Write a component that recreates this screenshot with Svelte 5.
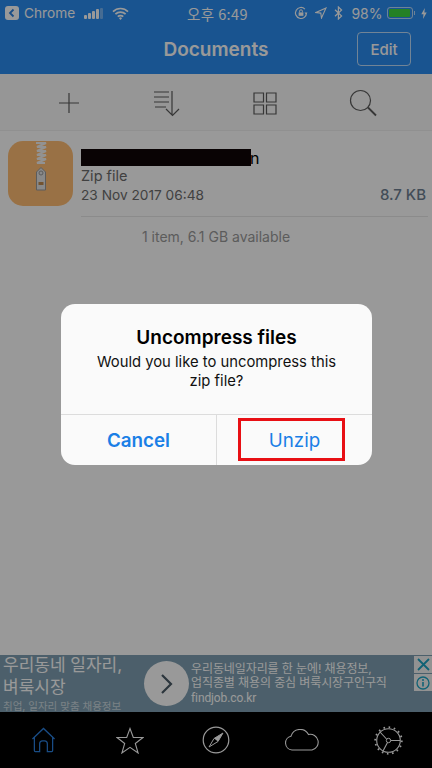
<script>
  const tools = ['plus', 'sort', 'grid', 'search'];
</script>

<div class="phone">
  <header class="head">
    <div class="status">
      <div class="st-left">
        <span class="back"><svg width="10" height="10" viewBox="0 0 10 10"><path d="M6.5 1.5 3 5l3.5 3.5" fill="none" stroke="#2b80e0" stroke-width="1.8"/></svg></span>
        <span class="st-txt">Chrome</span>
        <span class="signal"><i class="s1"></i><i class="s2"></i><i class="s3"></i><i class="s4"></i><i class="s5"></i></span>
        <svg class="wifi" width="17" height="13" viewBox="0 0 17 13"><path d="M1 4.6a10.6 10.6 0 0 1 15 0M3.4 7.2a7.2 7.2 0 0 1 10.2 0M5.8 9.7a3.7 3.7 0 0 1 5.4 0" fill="none" stroke="#fff" stroke-width="1.7"/><path d="M8.5 13 7 11.2a2 2 0 0 1 3 0z" fill="#fff"/></svg>
      </div>
      <div class="st-time">오후 6:49</div>
      <div class="st-right">
        <svg width="14" height="14" viewBox="0 0 14 14"><path d="M12.5 7a5.5 5.5 0 1 1-1.6-3.9" fill="none" stroke="#fff" stroke-width="1.2"/><path d="M13.5 6.5h-3l1.5 2z" fill="#fff"/><rect x="4.6" y="6.4" width="4.8" height="3.4" fill="#fff"/><path d="M5.6 6.4V5.2a1.4 1.4 0 0 1 2.8 0v1.2" fill="none" stroke="#fff"/></svg>
        <svg class="loc" width="12" height="12" viewBox="0 0 12 12"><path d="M11 1 1 5.5l4.8.6.7 4.9z" fill="none" stroke="#fff" stroke-width="1.1"/></svg>
        <svg class="bt" width="9" height="14" viewBox="0 0 9 14"><path d="M1 3.8 7.6 10 4.4 13V1l3.2 3L1 10.2" fill="none" stroke="#fff" stroke-width="1.2"/></svg>
        <span class="pct">98%</span>
        <span class="batt"><i></i></span><span class="nub"></span>
        <svg class="bolt" width="6" height="11" viewBox="0 0 6 11"><path d="M3.8 0 .3 6.2h2.2L2 11l3.7-6.5H3.4z" fill="#fff"/></svg>
      </div>
    </div>
    <div class="nav">
      <h1>Documents</h1>
      <span class="edit">Edit</span>
    </div>
  </header>

  <div class="tools">
    {#each tools as t}
      <span class="tool">
        {#if t === 'plus'}
          <svg width="20" height="20" viewBox="0 0 20 20"><path d="M10 0v20M0 10h20" stroke="#5c5c5c" stroke-width="1.2" fill="none"/></svg>
        {:else if t === 'sort'}
          <svg width="27" height="27" viewBox="0 0 27 27"><path d="M0 2h15M0 7h15M0 12h15M1 17h11M18 1v24M12 19l6.500 6.500L25 19" stroke="#5c5c5c" stroke-width="1.2" fill="none"/></svg>
        {:else if t === 'grid'}
          <svg width="24" height="23" viewBox="0 0 24 23"><path d="M1 1h9.500v9H1zM13.500 1H23v9h-9.500zM1 13h9.500v9H1zM13.500 13H23v9h-9.500z" stroke="#5c5c5c" stroke-width="1.2" fill="none"/></svg>
        {:else}
          <svg width="28" height="28" viewBox="0 0 28 28"><circle cx="11.500" cy="11.500" r="10" stroke="#5c5c5c" stroke-width="1.2" fill="none"/><path d="m19 18.500 8 8" stroke="#5c5c5c" stroke-width="1.800" fill="none"/></svg>
        {/if}
      </span>
    {/each}
  </div>

  <main class="content">
    <div class="row">
      <div class="zip">
        <svg width="14" height="50" viewBox="0 0 14 50"><path d="M2 2h10L3 6h9L3 10h9l-9 4h9l-9 4h9l-9 4h8" fill="none" stroke="#f4f4f4" stroke-width="2"/><path d="M7 26.500 11.500 31v18h-9V31z" fill="#e4e4e4" stroke="#999"/><circle cx="7" cy="32" r="2" fill="none" stroke="#999"/><rect x="4.500" y="41" width="5" height="3" fill="#c08a50"/></svg>
      </div>
      <div class="meta">
        <div class="name"><span class="redact"></span><span class="tail">n</span></div>
        <div class="type">Zip file</div>
        <div class="line"><span>23 Nov 2017 06:48</span><span class="size">8.7 KB</span></div>
      </div>
    </div>
    <p class="avail">1 item, 6.1 GB available</p>
  </main>

  <aside class="ad">
    <div class="ad-left">
      <div class="ad-title">우리동네 일자리,<br />벼룩시장</div>
      <div class="ad-sub">취업, 일자리 맞춤 채용정보</div>
    </div>
    <span class="ad-go"><svg width="14" height="22" viewBox="0 0 14 22"><path d="m2 2 9 9-9 9" fill="none" stroke="#4a5a66" stroke-width="2.200"/></svg></span>
    <div class="ad-right">
      <div>우리동네일자리를 한 눈에! 채용정보,</div>
      <div>업직종별 채용의 중심 벼룩시장구인구직</div>
      <div class="ad-url">findjob.co.kr</div>
    </div>
    <div class="ad-ctl">
      <span><svg width="13" height="13" viewBox="0 0 13 13"><path d="m1 1 11 11M12 1 1 12" stroke="#1ba3c4" stroke-width="1.800" fill="none"/></svg></span>
      <span><svg width="14" height="14" viewBox="0 0 14 14"><circle cx="7" cy="7" r="6" fill="none" stroke="#1ba3c4" stroke-width="1.300"/><path d="M7 6v4.500" stroke="#1ba3c4" stroke-width="1.600"/><circle cx="7" cy="3.900" r="1" fill="#1ba3c4"/></svg></span>
    </div>
  </aside>

  <nav class="tabs">
    <span><svg width="25" height="26" viewBox="0 0 26 26"><path d="M1.500 12 13 1l11.500 11M3.500 10.500V24a1 1 0 0 0 1 1H9V17a3 3 0 0 1 3-3h2a3 3 0 0 1 3 3v8h4.500a1 1 0 0 0 1-1V10.500" fill="none" stroke="#2b80e0" stroke-width="1.300"/></svg></span>
    <span><svg width="28" height="27" viewBox="0 0 28 27"><path d="m14 1.500 3.300 9h9.700l-7.700 6 2.800 9.500-8.100-5.700L5.900 26l2.800-9.500-7.700-6h9.700z" fill="none" stroke="#fff" stroke-width="1.100"/></svg></span>
    <span><svg width="28" height="28" viewBox="0 0 28 28"><circle cx="14" cy="14" r="12.800" fill="none" stroke="#fff" stroke-width="1.200"/><path d="m21 7-9 5.500L7 21l9-5.500z" fill="none" stroke="#fff" stroke-width="1"/><path d="m21 7-9 5.500 4 3z" fill="#fff"/></svg></span>
    <span><svg width="36" height="22" viewBox="0 0 36 22"><path d="M8 21a7 7 0 0 1-1-13.800A9.500 9.500 0 0 1 24.500 5.500 7.800 7.800 0 0 1 28 21z" fill="none" stroke="#fff" stroke-width="1.100"/></svg></span>
    <span><svg width="29" height="29" viewBox="0 0 29 29"><circle cx="14.500" cy="14.500" r="11.800" fill="none" stroke="#fff" stroke-width="1.100"/><circle cx="14.500" cy="14.500" r="13.300" fill="none" stroke="#fff" stroke-width="1.800" stroke-dasharray="1.600 3.600"/><circle cx="14.500" cy="14.500" r="2.200" fill="none" stroke="#fff"/><path d="M12.500 13 6 6M16.700 14.500H26M13.500 16.500 9 25" stroke="#fff" stroke-width="1.100" fill="none"/></svg></span>
  </nav>

  <div class="scrim"></div>

  <div class="dialog" role="dialog">
    <div class="d-body">
      <h2>Uncompress files</h2>
      <p>Would you like to uncompress this zip file?</p>
    </div>
    <div class="d-btns">
      <span class="d-btn bold">Cancel</span>
      <span class="d-btn">Unzip<span class="mark"></span></span>
    </div>
  </div>
</div>

<style>
  :global(body) { margin: 0; }
  .phone {
    position: relative;
    width: 432px;
    height: 768px;
    overflow: hidden;
    display: flex;
    flex-direction: column;
    background: #fff;
    font-family: Inter, "Noto Sans CJK KR", sans-serif;
  }
  .head { background: #2b8df0; color: #fff; height: 74px; flex: none; }
  .status {
    height: 24px;
    display: flex;
    align-items: center;
    justify-content: space-between;
    padding: 1px 5px 0 5px;
    font-size: 13.700px;
    position: relative;
  }
  .st-left, .st-right { display: flex; align-items: center; }
  .back {
    width: 14px; height: 14px; background: #fff; border-radius: 3px;
    display: flex; align-items: center; justify-content: center;
  }
  .st-txt { margin-left: 5px; }
  .signal { display: flex; align-items: flex-end; gap: 1px; margin-left: 9px; height: 11px; }
  .signal i { width: 3px; background: #fff; border-radius: 1px; display: block; }
  .s1 { height: 4px; } .s2 { height: 6px; } .s3 { height: 8px; } .s4 { height: 10px; }
  .signal .s5 { height: 11px; opacity: .35; }
  .wifi { margin-left: 9px; }
  .st-time { font-size: 14.500px; font-family: "Noto Sans CJK KR", Inter, sans-serif; letter-spacing: .4px; position: absolute; left: 187px; }
  .loc { margin-left: 7px; }
  .bt { margin-left: 7px; }
  .pct { margin-left: 8px; font-size: 14px; }
  .batt {
    margin-left: 4px; width: 22px; height: 8px; border: 1px solid #ffffffaa; border-radius: 3px;
    padding: 1px; box-sizing: content-box; display: block;
  }
  .batt i { display: block; width: 21px; height: 8px; background: #3dd53d; border-radius: 1px; }
  .nub { width: 1.500px; height: 4px; background: #ffffffaa; margin-left: 1px; }
  .bolt { margin-left: 6px; }
  .nav { position: relative; height: 50px; display: flex; align-items: center; justify-content: center; }
  h1 { margin: -1px 0 0 0; font-size: 19px; font-weight: 600; }
  .edit {
    position: absolute; right: 21px; top: 7px;
    width: 52px; height: 32px; border: 1.500px solid #ffffffb0; border-radius: 4px;
    display: flex; align-items: center; justify-content: center;
    font-size: 15px; font-weight: 500;
  }
  .tools {
    height: 56px; flex: none; background: #fafafa;
    display: flex; align-items: center; padding-left: 20px;
    border-bottom: 1px solid #f0f0f0;
  }
  .tool { width: 98px; display: flex; justify-content: center; margin-top: 2px; }
  .content { flex: 1; background: #fff; }
  .row { display: flex; height: 85px; box-sizing: border-box; padding: 10px 4px 0 8px; }
  .zip {
    width: 65px; height: 65px; border-radius: 15px; background: #ffbd74; flex: none;
    display: flex; justify-content: center; align-items: flex-start;
  }
  .meta {
    margin-left: 8px; flex: 1; height: 75px; border-bottom: 1px solid #e8e8e8;
    font-size: 14px; color: #6d6d6d;
  }
  .name { position: relative; height: 26px; padding-top: 8px; box-sizing: border-box; color: #000; font-size: 16px; line-height: 18px; }
  .redact { position: absolute; left: 0; top: 8px; width: 170px; height: 17px; background: #100508; }
  .tail { position: absolute; left: 169px; top: 8px; }
  .type { line-height: 18px; font-size: 14.500px; }
  .line { display: flex; justify-content: space-between; align-items: center; line-height: 20px; padding-right: 2px; font-size: 13.700px; }
  .size { font-size: 15px; font-weight: 500; color: #6e7f92; }
  .avail { margin: 12px 0 0; text-align: center; font-size: 14px; color: #9a9a9a; }
  .ad {
    position: relative; height: 57px; flex: none; background: #7f9fb2; color: #fff;
    display: flex; align-items: center;
  }
  .ad-left { width: 144px; flex: none; padding-left: 3px; box-sizing: border-box; }
  .ad-title { font-size: 17px; line-height: 22px; white-space: nowrap; }
  .ad-sub { font-size: 10.500px; line-height: 13px; white-space: nowrap; opacity: .6; margin-top: 2px; }
  .ad-go {
    width: 45px; height: 45px; background: #fff; border-radius: 50%; flex: none;
    display: flex; align-items: center; justify-content: center;
  }
  .ad-right { margin-left: 2px; font-size: 12px; line-height: 14.500px; white-space: nowrap; letter-spacing: -.1px; }
  .ad-url { font-family: Roboto, sans-serif; font-size: 12px; }
  .ad-ctl { position: absolute; right: 0; top: 1px; width: 18px; display: flex; flex-direction: column; gap: 1px; }
  .ad-ctl span { height: 17px; background: #f4f4f4; display: flex; align-items: center; justify-content: center; }
  .tabs {
    height: 56px; flex: none; background: #000;
    display: grid; grid-template-columns: repeat(5, 1fr); align-items: center; justify-items: center;
  }
  .tabs span { display: flex; }
  .scrim { position: absolute; inset: 0; background: rgba(0, 0, 0, .4); }
  .dialog {
    position: absolute; left: 61px; top: 304px; width: 311px; height: 161px;
    background: #fafafa; border-radius: 14px; display: flex; flex-direction: column;
    overflow: hidden;
  }
  .d-body { height: 111px; box-sizing: border-box; padding: 22px 34px 0; text-align: center; border-bottom: 1px solid #dcdcdc; }
  h2 { margin: 0; font-size: 19px; line-height: 24px; font-weight: 600; color: #000; }
  .d-body p { margin: 3px 0 0; font-size: 14.800px; line-height: 18.500px; color: #111; }
  .d-btns { flex: 1; display: flex; }
  .d-btn {
    position: relative; flex: 1; display: flex; align-items: center; justify-content: center;
    font-size: 18.800px; color: #1a7fe6;
  }
  .d-btn.bold { font-weight: 600; border-right: 1px solid #dcdcdc; }
  .mark {
    position: absolute; left: 21px; top: 3px; width: 107px; height: 43px;
    border: 3px solid #e80f14; box-sizing: border-box;
  }
</style>
